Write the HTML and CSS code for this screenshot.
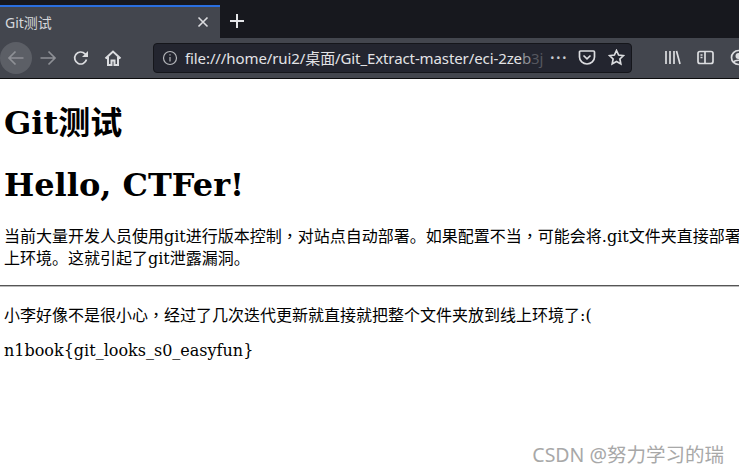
FILE: index.html
```html
<!DOCTYPE html>
<html lang="en">
  <head>
    <meta charset="UTF-8" />
    <title>Git测试</title>
    <link rel="stylesheet" href="styles.css">
  </head>

  <body>
    <div class="browser">
      <div class="tabbar">
        <div class="tab">
          <span class="tab-title">Git测试</span>
          <svg class="tab-close" width="12" height="12" viewBox="0 0 12 12"><path d="M1.500 1.500l9 9M10.500 1.500l-9 9"/></svg>
        </div>
        <svg class="new-tab" width="16" height="16" viewBox="0 0 16 16"><path d="M8 1v14M1 8h14"/></svg>
      </div>

      <div class="toolbar">
        <div class="nav-btn back">
          <svg width="18" height="18" viewBox="0 0 18 18"><path d="M16.500 9H2M8.500 2.500L2 9l6.500 6.500"/></svg>
        </div>
        <div class="nav-btn forward">
          <svg width="18" height="18" viewBox="0 0 18 18"><path d="M1.500 9H16M9.500 2.500L16 9l-6.500 6.500"/></svg>
        </div>
        <div class="nav-btn reload">
          <svg width="18" height="18" viewBox="0 0 18 18"><path d="M14.500 10.500A6 6 0 1 1 13 4.800L15 7"/><path class="solid" d="M16 2v6h-6z"/></svg>
        </div>
        <div class="nav-btn">
          <svg class="home" width="18" height="18" viewBox="0 0 18 18"><path d="M1.500 9.500L9 2.500l7.500 7M4 8v8h3.500v-4.500h3V16H14V8"/></svg>
        </div>

        <div class="urlbar">
          <svg class="info" width="16" height="16" viewBox="0 0 16 16"><circle cx="8" cy="8" r="6.500"/><path d="M8 7v4.500M8 4.200v1.300"/></svg>
          <span class="url">file:///home/rui2/桌面/Git_Extract-master/eci-2ze<span class="url-mid">b</span><span class="url-fade">3j</span></span>
          <span class="dots">•••</span>
          <svg class="url-icon" width="18" height="17" viewBox="0 0 18 17"><path d="M2.500 2h13A1 1 0 0 1 16.500 3v5a7.500 7 0 0 1-15 0V3a1 1 0 0 1 1-1z"/><path d="M5.500 6.500L9 9.800l3.500-3.300"/></svg>
          <svg class="url-icon star" width="17" height="17" viewBox="0 0 17 17"><path d="M8.500 1.500l2.100 4.500 4.900.6-3.600 3.400.9 4.900-4.300-2.400-4.300 2.400.9-4.900-3.600-3.400 4.900-.6z"/></svg>
        </div>

        <div class="tools">
          <svg width="17" height="17" viewBox="0 0 17 17"><path d="M2 2v13M6 2v13M10 2v13M12.500 2l3.500 13"/></svg>
          <svg width="17" height="17" viewBox="0 0 17 17"><rect x="1" y="2.500" width="15" height="12" rx="2"/><path d="M8 2.500v12M3.500 6h2M3.500 8.500h2"/></svg>
          <svg width="17" height="17" viewBox="0 0 17 17"><circle cx="8.500" cy="8.500" r="7"/><circle class="solid" cx="8.500" cy="7" r="3"/><path d="M3.500 13.500c1-3 9-3 10 0"/></svg>
        </div>
      </div>
    </div>

    <div class="page">
      <h1>Git测试</h1>
      <h1 class="hello">Hello, CTFer!</h1>
      <p>当前大量开发人员使用git进行版本控制<span class="mark">，</span>对站点自动部署。如果配置不当<span class="mark">，</span>可能会将.git文件夹直接部署到线上环境。这就引起了git泄露漏洞。</p>
      <hr />
      <p>小李好像不是很小心<span class="mark">，</span>经过了几次迭代更新就直接就把整个文件夹放到线上环境了:(</p>
      <p>n1book{git_looks_s0_easyfun}</p>
    </div>

    <div class="watermark">CSDN @努力学习的瑞</div>
  </body>
</html>
```

FILE: styles.css
```css
* {
  box-sizing: border-box;
}

html,
body {
  margin: 0;
  height: 100%;
  overflow: hidden;
}

body {
  position: relative;
  background-color: #fff;
  color: #000;
  font-family: "DejaVu Serif", "Noto Sans CJK SC", serif;
}

.tabbar {
  display: flex;
  align-items: flex-end;
  height: 38px;
  background-color: #17181e;
}

.tab {
  display: flex;
  align-items: center;
  justify-content: space-between;
  width: 220px;
  height: 33px;
  padding: 0 11px 2px 5px;
  background-color: #43464e;
  border-top: 2px solid #2a6fe0;
  color: #d6d8dc;
  font-family: "Noto Sans", "Noto Sans CJK SC", sans-serif;
  font-size: 14px;
}

.tab-close {
  fill: none;
  stroke: #dcdde0;
  stroke-width: 1.6;
}

.new-tab {
  margin-left: 9px;
  margin-bottom: 9px;
  fill: none;
  stroke: #e4e5e8;
  stroke-width: 2;
}

.toolbar {
  display: flex;
  align-items: center;
  height: 41px;
  padding: 0 0 1px 0;
  background-color: #43464e;
  border-bottom: 1px solid #0c0c0d;
}

.nav-btn {
  display: flex;
  align-items: center;
  justify-content: center;
  width: 32px;
  height: 32px;
  flex-shrink: 0;
}

.nav-btn svg,
.tools svg,
.url-icon,
.info {
  fill: none;
  stroke: #dcdde0;
  stroke-width: 1.7;
}

.solid {
  fill: #dcdde0;
  stroke: none;
}

.back {
  background-color: #5c5f66;
  border-radius: 50%;
}

.back svg {
  stroke: #8e9096;
}

.forward svg {
  stroke: #8e9096;
}

.reload {
  margin-left: 1px;
}

.nav-btn .home {
  stroke-width: 2;
}

.urlbar {
  display: flex;
  align-items: center;
  width: 479px;
  height: 30px;
  margin-left: 24px;
  padding: 0 6px 0 8px;
  flex-shrink: 0;
  background-color: #23252f;
  border: 1px solid #15161b;
  border-radius: 4px;
}

.info {
  flex-shrink: 0;
  stroke: #b4b6ba;
  stroke-width: 1.2;
}

.url {
  width: 364px;
  margin-left: 7px;
  white-space: nowrap;
  color: #e2e3e6;
  font-family: "Noto Sans", "Noto Sans CJK SC", sans-serif;
  font-size: 15px;
  letter-spacing: -0.100px;
}

.url-mid {
  color: #8d8f96;
}

.url-fade {
  color: #55575f;
}

.dots {
  margin-left: 7px;
  color: #c8cace;
  font-family: "Noto Sans", sans-serif;
  font-size: 11px;
  letter-spacing: 1.800px;
}

.url-icon {
  flex-shrink: 0;
  margin-left: 10px;
}

.url-icon.star {
  margin-left: 12px;
}

.tools {
  display: flex;
  align-items: center;
  gap: 16px;
  margin-left: 32px;
  flex-shrink: 0;
}

.page {
  padding: 22px 0 0 4px;
  width: 779px;
}

h1 {
  margin: 0 0 18px;
  font-size: 32px;
  font-weight: bold;
  line-height: 44px;
}

.hello {
  margin-bottom: 17px;
}

p {
  margin: 0 0 13px;
  font-size: 16px;
  line-height: 22px;
}

.mark {
  font-family: "Noto Sans CJK TC", sans-serif;
}

hr {
  margin: 15px 0 16px -4px;
  border: 0;
  border-top: 1px solid #555;
  border-bottom: 1px solid #bbb;
}

.watermark {
  position: absolute;
  right: 15px;
  bottom: 6px;
  color: #a8a8a8;
  font-family: "Noto Sans", "Noto Sans CJK SC", sans-serif;
  font-size: 19.500px;
}
```
